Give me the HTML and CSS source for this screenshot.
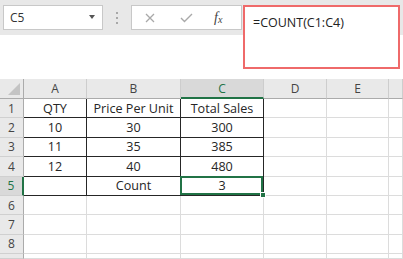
FILE: index.html
```html
<!DOCTYPE html>
<html lang="en">
<head>
    <meta charset="UTF-8">
    <title>Count</title>
    <link rel="stylesheet" href="styles.css">
</head>
<body>
    <div class="formula-area">
        <div class="left">
            <div class="toolbar">
                <div class="name-box">
                    <span>C5</span>
                    <span class="caret"></span>
                </div>
                <div class="grip"><i></i><i></i><i></i></div>
                <div class="fx-buttons">
                    <svg class="icon-x" width="10" height="10" viewBox="0 0 10 10">
                        <path d="M1 1 L9 9 M9 1 L1 9" stroke="#a9a9a9" stroke-width="1.3" fill="none"/>
                    </svg>
                    <svg class="icon-check" width="13" height="10" viewBox="0 0 13 10">
                        <path d="M1 5 L4.5 8.5 L12 1" stroke="#a9a9a9" stroke-width="1.4" fill="none"/>
                    </svg>
                    <span class="fx">f<sub>x</sub></span>
                </div>
            </div>
        </div>
        <div class="right">
            <div class="formula-box">=COUNT(C1:C4)</div>
        </div>
    </div>

    <div class="sheet">
        <!-- header row -->
        <div class="hd corner"><span class="tri"></span></div>
        <div class="hd">A</div>
        <div class="hd">B</div>
        <div class="hd on">C</div>
        <div class="hd">D</div>
        <div class="hd">E</div>
        <div class="hd"></div>

        <div class="rh">1</div>
        <div class="c d">QTY</div>
        <div class="c d">Price Per Unit</div>
        <div class="c d">Total Sales</div>
        <div class="c"></div><div class="c"></div><div class="c"></div>

        <div class="rh">2</div>
        <div class="c d">10</div>
        <div class="c d">30</div>
        <div class="c d">300</div>
        <div class="c"></div><div class="c"></div><div class="c"></div>

        <div class="rh">3</div>
        <div class="c d">11</div>
        <div class="c d">35</div>
        <div class="c d">385</div>
        <div class="c"></div><div class="c"></div><div class="c"></div>

        <div class="rh">4</div>
        <div class="c d">12</div>
        <div class="c d">40</div>
        <div class="c d">480</div>
        <div class="c"></div><div class="c"></div><div class="c"></div>

        <div class="rh on">5</div>
        <div class="c d"></div>
        <div class="c d">Count</div>
        <div class="c d sel">3</div>
        <div class="c"></div><div class="c"></div><div class="c"></div>

        <div class="rh">6</div>
        <div class="c"></div><div class="c"></div><div class="c"></div>
        <div class="c"></div><div class="c"></div><div class="c"></div>

        <div class="rh">7</div>
        <div class="c"></div><div class="c"></div><div class="c"></div>
        <div class="c"></div><div class="c"></div><div class="c"></div>

        <div class="rh">8</div>
        <div class="c"></div><div class="c"></div><div class="c"></div>
        <div class="c"></div><div class="c"></div><div class="c"></div>

        <div class="rh"></div>
        <div class="c"></div><div class="c"></div><div class="c"></div>
        <div class="c"></div><div class="c"></div><div class="c"></div>
    </div>
</body>
</html>
```

FILE: styles.css
```css
body {
    margin: 0;
    width: 403px;
    height: 259px;
    overflow: hidden;
    background: #fff;
    font-family: "Open Sans", "Liberation Sans", sans-serif;
    color: #222;
}

/* formula bar */
.formula-area {
    display: flex;
    height: 79px;
}

.left {
    width: 243px;
}

.toolbar {
    display: flex;
    align-items: flex-start;
    height: 35px;
    padding: 5px 0 0 3px;
    box-sizing: border-box;
    background: #e8e8e8;
}

.name-box {
    display: flex;
    align-items: center;
    justify-content: space-between;
    width: 100px;
    height: 25px;
    padding: 0 7px 0 6px;
    box-sizing: border-box;
    background: #fff;
    border: 1px solid #c8c8c8;
    font-size: 12px;
    color: #333;
}

.caret {
    width: 0;
    height: 0;
    border-left: 3.5px solid transparent;
    border-right: 3.5px solid transparent;
    border-top: 4px solid #555;
    margin-top: -2px;
}

.grip {
    display: flex;
    flex-direction: column;
    gap: 3px;
    margin: 7px 0 0 13px;
}

.grip i {
    display: block;
    width: 2px;
    height: 2px;
    background: #a8a8a8;
}

.fx-buttons {
    display: flex;
    align-items: center;
    width: 111px;
    height: 25px;
    margin-left: 13px;
    box-sizing: border-box;
    background: #fff;
    border: 1px solid #c8c8c8;
}

.icon-x {
    margin-left: 13px;
}

.icon-check {
    margin-left: 25px;
}

.fx {
    margin-left: 21px;
    font-family: "Liberation Serif", serif;
    font-style: italic;
    font-size: 14px;
    color: #444;
}

.fx sub {
    font-size: 10px;
    vertical-align: -1px;
}

.right {
    flex: 1;
    padding: 5px 3px 0 0;
    background: linear-gradient(#e8e8e8 0 35px, #fff 35px);
}

.formula-box {
    height: 64px;
    box-sizing: border-box;
    padding: 7px 8px;
    background: #fff;
    border: 2px solid #ef6a6a;
    font-size: 12.5px;
    color: #222;
}

/* grid */
.sheet {
    display: grid;
    grid-template-columns: 24px 63px 94px 83px 63px 62px 1fr;
    grid-template-rows: 20px repeat(8, 19.4px) 1fr;
    height: 180px;
}

.sheet > div {
    display: flex;
    align-items: center;
    justify-content: center;
    box-sizing: border-box;
    overflow: hidden;
}

.hd {
    background: #e9e9e9;
    border-right: 1px solid #cdcdcd;
    border-bottom: 1px solid #ababab;
    font-size: 12px;
    color: #444;
}

.hd.corner {
    align-items: flex-end;
    justify-content: flex-end;
    padding: 0 3px 3px 0;
    border-right-color: #ababab;
}

.tri {
    width: 0;
    height: 0;
    border-left: 12px solid transparent;
    border-bottom: 12px solid #c4c4c4;
}

.hd.on {
    background: #d9d9d9;
    color: #217346;
    border-bottom: 2px solid #217346;
}

.rh {
    background: #e9e9e9;
    border-right: 1px solid #ababab;
    border-bottom: 1px solid #d0d0d0;
    font-size: 12px;
    color: #444;
}

.rh.on {
    background: #d9d9d9;
    color: #217346;
    border-right: 2px solid #217346;
}

.c {
    border-right: 1px solid #dcdcdc;
    border-bottom: 1px solid #dcdcdc;
    font-size: 12.6px;
    color: #262626;
}

.c.d {
    border-right-color: #262626;
    border-bottom-color: #262626;
}

/* active cell */
.sel {
    position: relative;
    z-index: 1;
    overflow: visible !important;
}

.sel::after {
    content: "";
    position: absolute;
    top: -1px;
    left: -1px;
    right: 0;
    bottom: 0;
    border: 2px solid #217346;
}

.sel::before {
    content: "";
    position: absolute;
    right: -3px;
    bottom: -3px;
    width: 4px;
    height: 4px;
    background: #217346;
    border: 1px solid #fff;
    z-index: 2;
}
```
